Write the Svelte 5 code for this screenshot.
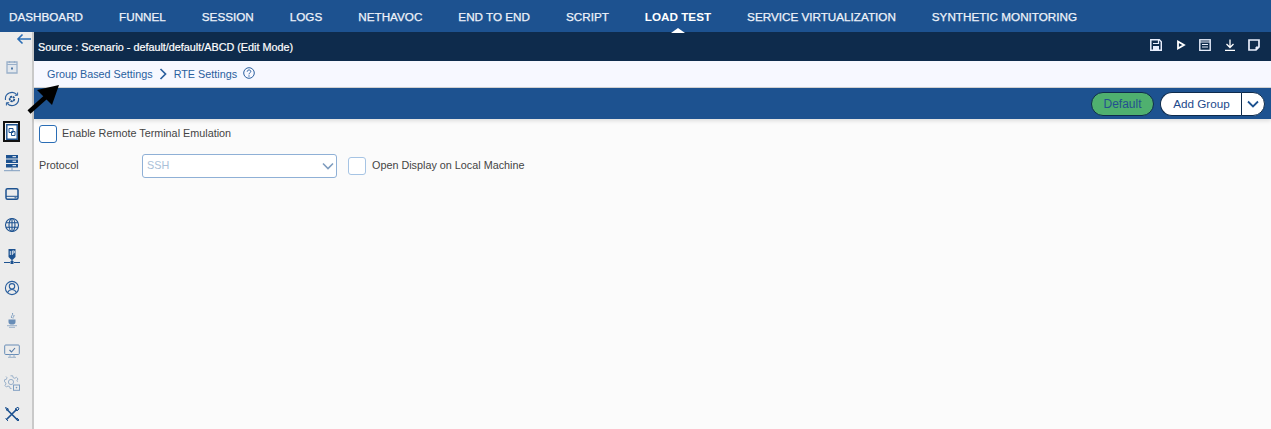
<script>
  const tabs = ['DASHBOARD','FUNNEL','SESSION','LOGS','NETHAVOC','END TO END','SCRIPT','LOAD TEST','SERVICE VIRTUALIZATION','SYNTHETIC MONITORING'];
</script>

<div class="page">
  <nav class="topnav">
    {#each tabs as t}
      <span class="tab" class:active={t === 'LOAD TEST'}>{t}</span>
    {/each}
  </nav>
  <div class="body">
    <aside class="side">
      <svg class="back" viewBox="0 0 16 12" width="16" height="12"><path d="M15 6H2M6.500 1.500 2 6l4.500 4.500" fill="none" stroke="#2a6db5" stroke-width="1.600"/></svg>
      <svg class="ic dim" viewBox="0 0 16 16"><path d="M3 3h10v11H3z" fill="#dfe6ee" stroke="#7f9dbf" stroke-width="1.300"/><path d="M3 5.500h10M5.500 2v2M10.500 2v2" stroke="#7f9dbf" stroke-width="1.200"/><rect x="7" y="8.500" width="2" height="2" fill="#1d5290"/></svg>
      <svg class="ic" viewBox="0 0 16 16"><circle cx="8" cy="8" r="2.300" fill="none" stroke="#1d5290" stroke-width="1.800" stroke-dasharray="2 .6"/><path d="M1.500 9a6.500 6.500 0 0 1 11.300-5.300M14.500 7a6.500 6.500 0 0 1-11.300 5.300" fill="none" stroke="#2a5f9e" stroke-width="1.100"/><path d="M13.600 1.500V4.300H10.800M2.400 14.500V11.700H5.200" fill="none" stroke="#2a5f9e" stroke-width="1"/></svg>
      <div class="selected"><svg viewBox="0 0 12 16" width="12" height="16"><path d="M.8.800h10.400v14.400H.8z" fill="#fff" stroke="#1d5290" stroke-width="1.400"/><path d="M3 4.500h4v4H3zM5.500 7.500H9v4H5.500z" fill="none" stroke="#1d5290"/></svg></div>
      <svg class="ic server" viewBox="0 0 16 18"><path d="M2 1h12v3.500H2zM2 5.500h12V9H2zM2 10h12v3.500H2z" fill="#1d5290"/><path d="M8 13.500v3M0 16.700h16" stroke="#7f9dbf"/><path d="M8.500 2.700h3.500M8.500 7.200h3.500M8.500 11.700h3.500" stroke="#fff"/></svg>
      <svg class="ic" viewBox="0 0 16 16"><rect x="2" y="2.700" width="12" height="10.600" rx="1.500" fill="none" stroke="#1d5290" stroke-width="1.500"/><path d="M2 10.300h12" stroke="#1d5290" stroke-width="1"/><path d="M10.500 11.800h2" stroke="#1d5290"/></svg>
      <svg class="ic" viewBox="0 0 16 16"><g fill="none" stroke="#1d5290" stroke-width="1.100"><circle cx="8" cy="8" r="6.500"/><ellipse cx="8" cy="8" rx="3" ry="6.500"/><path d="M2 5.800h12M2 10.200h12M8 1.500v13"/></g></svg>
      <svg class="ic" viewBox="0 0 16 16"><path d="M4.500 0h7v8l-2.500 2.500h-2l-2.500-2.500z" fill="#1d5290"/><path d="M8 10v3M0 13.500h6M10 13.500h6" stroke="#1d5290" stroke-width="1.200"/><rect x="6.500" y="12" width="3" height="3" fill="#1d5290"/><path d="M6.300 2v4M8.300 2v4M8.300 2h2v2h-2" fill="none" stroke="#fff" stroke-width=".8"/></svg>
      <svg class="ic" viewBox="0 0 16 16"><g fill="none" stroke="#2a5f9e" stroke-width="1.100"><circle cx="8" cy="8" r="6.600"/><circle cx="8" cy="6.300" r="2.700"/><path d="M3.500 12.800c1-2.300 2.600-3.300 4.500-3.300s3.500 1 4.500 3.300"/></g></svg>
      <svg class="ic dim" viewBox="0 0 16 16"><path d="M8.500 1c1 2-2 3-1 5M10 3c.500 1.500-1.500 2-1 3.500" fill="none" stroke="#5a84b3"/><path d="M4.500 7.500h7v2.500c0 2-1.500 2.500-3.500 2.500S4.500 12 4.500 10z" fill="#3c6ea6"/><path d="M3 13.700h10M5 15.300h6" stroke="#7f9dbf"/></svg>
      <svg class="ic dim" viewBox="0 0 16 16"><rect x=".7" y="2" width="14.600" height="9.500" rx="1" fill="none" stroke="#3c6ea6"/><path d="M5.500 7l2 2 3.500-4" fill="none" stroke="#1d5290" stroke-width="1.100"/><path d="M6 11.500V14M10 11.500V14M4 14.300h8" stroke="#7f9dbf"/></svg>
      <svg class="ic dim" viewBox="0 0 16 16"><path d="M6.500.800h2.200l.4 1.800 1.700.7 1.600-1L14 3.900l-1 1.600.5 1.200M7.500 13.500H6.100l-.4-1.800-1.700-.7-1.600 1L1 10.500l1-1.600-.7-1.700L.500 6.800v-2l1.800-.4.700-1.700L2 1.500" fill="none" stroke="#7f9dbf"/><circle cx="7" cy="7" r="2.600" fill="none" stroke="#7f9dbf"/><rect x="9.500" y="10" width="6" height="5.300" fill="#eee" stroke="#5a84b3"/><circle cx="12.500" cy="12.600" r=".8" fill="#5a84b3"/></svg>
      <svg class="ic" viewBox="0 0 16 16"><path d="M3 3.500 13.500 14M13 3 2.500 13.500" stroke="#1d5290" stroke-width="1.700"/><path d="M1.500 1.500 4.500 3 3 4.500zM11 3l3-1.800 1 1.800-2 2zM12 13l1-1 2 2-1 1zM1.500 12.500 4 15" fill="none" stroke="#1d5290" stroke-width="1"/></svg>
    </aside>

    <main class="main">
      <div class="source">
        <span>Source : Scenario - default/default/ABCD (Edit Mode)</span>
        <div class="actions">
          <svg viewBox="0 0 12 12" width="12" height="12"><path d="M.8.800h8.500l2 2v8.400H.8z" fill="none" stroke="#e8eefc" stroke-width="1.500"/><path d="M3 4.500h5.500V1" fill="none" stroke="#e8eefc" stroke-width="1.200"/><path d="M3 7h6v4H3z" fill="#e8eefc"/></svg>
          <svg viewBox="0 0 12 12" width="12" height="12"><path d="M3 2.500 9 6l-6 3.500z" fill="none" stroke="#fff" stroke-width="1.800"/></svg>
          <svg viewBox="0 0 12 12" width="12" height="12"><rect x=".8" y=".8" width="10.400" height="10.600" fill="none" stroke="#e8eefc" stroke-width="1.400"/><path d="M1 3h10M3 5.500h6M3 8h6" stroke="#e8eefc" stroke-width="1.100"/></svg>
          <svg viewBox="0 0 12 12" width="12" height="12"><path d="M6 .500v8M2.500 5 6 8.500 9.500 5M1 11.300h10" fill="none" stroke="#fff" stroke-width="1.300"/></svg>
          <svg viewBox="0 0 12 12" width="12" height="12"><path d="M1 1h10v7l-3 3H1z" fill="none" stroke="#e8eefc" stroke-width="1.700"/><path d="M8 11V8h3" fill="#e8eefc" stroke="#e8eefc"/></svg>
        </div>
      </div>
      <div class="crumbs">
        <span>Group Based Settings</span>
        <svg viewBox="0 0 8 12" width="8" height="12"><path d="M1.500 1 6.500 6l-5 5" fill="none" stroke="#2a5f9e" stroke-width="1.700"/></svg>
        <span>RTE Settings</span>
        <svg class="help" viewBox="0 0 12 12" width="12" height="12"><circle cx="6" cy="6" r="5.300" fill="none" stroke="#2a5f9e"/><path d="M4.200 4.700c0-2.300 3.600-2.300 3.600-.2 0 1.300-1.800 1.300-1.800 2.800" fill="none" stroke="#2a5f9e"/><circle cx="6" cy="9" r=".7" fill="#2a5f9e"/></svg>
      </div>
      <div class="toolbar">
        <button class="default">Default</button>
        <div class="split">
          <button class="add">Add Group</button>
          <button class="caret" aria-label="More"><svg viewBox="0 0 12 8" width="12" height="8"><path d="M1 1.500 6 6.500l5-5" fill="none" stroke="#1d5290" stroke-width="1.800"/></svg></button>
        </div>
      </div>
      <div class="content">
        <label class="row first"><span class="check strong"></span><span class="t">Enable Remote Terminal Emulation</span></label>
        <div class="row second">
          <span class="lbl t">Protocol</span>
          <div class="select"><span class="t">SSH</span><svg viewBox="0 0 12 8" width="12" height="8"><path d="M1 1.500 6 6.500l5-5" fill="none" stroke="#7f9dbf" stroke-width="1.600"/></svg></div>
          <label class="open"><span class="check"></span><span class="t">Open Display on Local Machine</span></label>
        </div>
      </div>
    </main>
  </div>
  <svg class="pointer" viewBox="0 0 34 30" width="34" height="30"><path d="M2 27 20 11" stroke="#000" stroke-width="4.500"/><path d="M32 0 10 5 25 20z" fill="#000"/></svg>
</div>

<style>
  :global(body) { margin: 0; background: #fbfbfb; }
  .page {
    position: relative;
    width: 1271px;
    height: 429px;
    overflow: hidden;
    font-family: "Liberation Sans", Arial, sans-serif;
    color: #444;
  }
  .topnav {
    display: flex;
    align-items: center;
    gap: 36px;
    height: 32px;
    padding-left: 9px;
    background: #1d5290;
    box-sizing: border-box;
  }
  .tab {
    position: relative;
    font-size: 11.700px;
    color: #eef2fa;
    -webkit-text-stroke: 0.25px #eef2fa;
    white-space: nowrap;
  }
  .tab.active { color: #fff; font-weight: 700; -webkit-text-stroke: 0; }
  .tab.active::after {
    content: "";
    position: absolute;
    left: 26px;
    top: 18px;
    border-left: 7px solid transparent;
    border-right: 7px solid transparent;
    border-bottom: 5px solid #fff;
  }
  .body { display: flex; height: 397px; }
  .side {
    width: 23px;
    padding: 1px 9px 0 0;
    flex: none;
    display: flex;
    flex-direction: column;
    align-items: center;
    background: #ececec;
    border-right: 2px solid #c9c9c9;
  }
  .back { align-self: flex-start; margin-left: 16px; height: 12px; flex: none; }
  .ic { width: 16px; height: 16px; margin-top: 15.500px; flex: none; }
  .back + .ic { margin-top: 14px; }
  .ic + .ic { margin-top: 15.500px; }
  .back + .ic + .ic { margin-top: 16px; }
  .ic.dim { opacity: .75; }
  .selected {
    display: flex;
    align-items: center;
    justify-content: center;
    flex: none;
    width: 13px;
    height: 17px;
    margin-top: 14px;
    border: 2px solid #111;
    background: #f5f5f5;
  }
  .selected + .ic { margin-top: 12px; }
  .server { height: 18px; margin-bottom: -2px; }
  .main { flex: 1; min-width: 0; display: flex; flex-direction: column; }
  .source {
    display: flex;
    align-items: center;
    justify-content: space-between;
    height: 29px;
    padding: 0 11px 0 4px;
    background: #0e2b4c;
    color: #fff;
    font-size: 10.800px;
    -webkit-text-stroke: 0.2px #fff;
  }
  .actions { display: flex; gap: 12.500px; align-items: center; margin-bottom: 3px; }
  .crumbs {
    display: flex;
    align-items: center;
    height: 26px;
    padding-left: 13px;
    gap: 6px;
    background: #f7f8ff;
    color: #2a5f9e;
    font-size: 10.800px;
    border-bottom: 1px solid #d4d4d4;
  }
  .crumbs svg:first-of-type { margin-right: 1px; }
  .crumbs .help { margin: -2px 0 0 0; }
  .toolbar {
    position: relative;
    display: flex;
    align-items: center;
    justify-content: flex-end;
    gap: 6px;
    height: 31px;
    padding-right: 6px;
    background: #1d5290;
    box-shadow: 0 2px 4px rgba(0,0,0,.12);
  }
  button { font: inherit; font-size: 12px; margin: 0; }
  .default {
    width: 63px;
    height: 24px;
    border: 1px solid #0e2b4c;
    border-radius: 12px;
    background: #4fb06f;
    color: #24508f;
    padding: 0;
  }
  .split { display: flex; height: 24px; }
  .add {
    width: 81px;
    border: 1px solid #0e2b4c;
    border-right: 0;
    border-radius: 12px 0 0 12px;
    background: #fff;
    color: #1d4a8c;
    font-size: 11.700px;
    padding: 0 0 0 1px;
  }
  .caret {
    display: flex;
    align-items: center;
    justify-content: center;
    width: 24px;
    border: 1px solid #0e2b4c;
    border-radius: 0 12px 12px 0;
    background: #fff;
    padding: 0;
  }
  .content { flex: 1; background: #fbfbfb; padding-left: 5px; font-size: 10.800px; }
  .row { display: flex; align-items: center; }
  .t { margin-bottom: 2px; }
  .first { margin-top: 6px; height: 18px; gap: 5px; line-height: 16px; }
  .second { margin-top: 11px; height: 24px; line-height: 18px; }
  .check {
    width: 16px;
    height: 16px;
    border: 1px solid #a6c4e4;
    border-radius: 3px;
    background: #fff;
    flex: none;
  }
  .check.strong { border-color: #2a6db5; }
  .lbl { width: 103px; }
  .select {
    display: flex;
    align-items: center;
    justify-content: space-between;
    width: 187px;
    height: 22px;
    padding: 0 2px 0 4px;
    border: 1px solid #8fb0d6;
    border-radius: 3px;
    background: #fff;
    color: #a9bfd8;
  }
  .open { display: flex; align-items: center; gap: 6px; margin-left: 11px; }
  .pointer { position: absolute; left: 27px; top: 85px; }
</style>
